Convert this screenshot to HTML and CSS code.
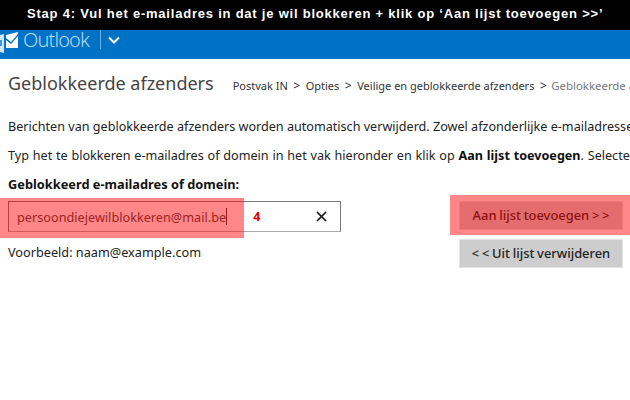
FILE: index.html
```
<!DOCTYPE html>
<html lang="nl">
<head>
<meta charset="utf-8">
<title>Stap 4</title>
<link rel="stylesheet" href="styles.css">
</head>
<body>
<div class="caption">Stap 4: Vul het e-mailadres in dat je wil blokkeren + klik op ‘Aan lijst toevoegen &gt;&gt;’</div>
<header class="topbar">
  <svg class="logo" width="18" height="22" viewBox="0 0 18 22" aria-hidden="true">
    <path d="M0 3 L4 2 L4 21 L0 20 Z" fill="#cfe6f6"/>
    <path d="M0 8 L2 8 L2 14 L0 14 Z" fill="#3f93d3"/>
    <path d="M6 3 L18 0 L18 2 L11 10 L6 6 Z" fill="#fff"/>
    <path d="M6 8 L11 12 L18 4 L18 16 L6 16 Z" fill="#fff"/>
  </svg>
  <span class="brand">Outlook</span>
  <span class="divider"></span>
  <svg class="chevron" width="12" height="8" viewBox="0 0 12 8" aria-hidden="true">
    <path d="M1 1.5 L6 6.5 L11 1.5" fill="none" stroke="#fff" stroke-width="2"/>
  </svg>
</header>
<main class="page">
  <div class="heading">
    <h1 class="title">Geblokkeerde afzenders</h1>
    <nav class="crumbs">
      <span>Postvak IN</span><b class="sep">&gt;</b><span>Opties</span><b class="sep">&gt;</b><span>Veilige en geblokkeerde afzenders</span><b class="sep">&gt;</b><span class="current">Geblokkeerde a</span>
    </nav>
  </div>
  <p class="line">Berichten van geblokkeerde afzenders worden automatisch verwijderd. Zowel afzonderlijke e-mailadresse</p>
  <p class="line line-wide">Typ het te blokkeren e-mailadres of domein in het vak hieronder en klik op <strong>Aan lijst toevoegen</strong>. Selecte</p>
  <div class="label">Geblokkeerd e-mailadres of domein:</div>
  <div class="form">
    <div class="field-col">
      <div class="field">
        <span class="value">persoondiejewilblokkeren@mail.be</span><span class="caret"></span>
        <span class="step">4</span>
        <svg class="clear" width="11" height="11" viewBox="0 0 11 11" aria-hidden="true">
          <path d="M1 1 L10 10 M10 1 L1 10" stroke="#111" stroke-width="1.6" fill="none"/>
        </svg>
      </div>
      <div class="example">Voorbeeld: naam@example.com</div>
    </div>
    <div class="buttons">
      <div class="btn">Aan lijst toevoegen &gt; &gt;</div>
      <div class="btn">&lt; &lt; Uit lijst verwijderen</div>
    </div>
  </div>
</main>
<div class="mark mark-field"></div>
<div class="mark mark-button"></div>
</body>
</html>
```
FILE: styles.css
```
html, body {
  margin: 0;
  padding: 0;
}
body {
  width: 630px;
  height: 400px;
  overflow: hidden;
  position: relative;
  background: #fff;
  color: #222;
  font-family: "Noto Sans", "Open Sans", sans-serif;
  font-size: 13px;
}
.caption {
  height: 30px;
  background: #000;
  color: #fff;
  font-family: "Liberation Sans", Arial, sans-serif;
  font-weight: 700;
  font-size: 13px;
  letter-spacing: 0.78px;
  line-height: 28px;
  padding-left: 27px;
  white-space: nowrap;
}
.topbar {
  height: 29px;
  background: #0072c6;
  display: flex;
  align-items: flex-start;
}
.logo {
  margin-top: 2px;
  flex: none;
}
.brand {
  margin-left: 5px;
  color: #b4d9f2;
  font-size: 20px;
  font-weight: 300;
  letter-spacing: -0.9px;
  line-height: 24px;
  margin-top: -2px;
}
.divider {
  width: 1.5px;
  height: 19px;
  margin-left: 11px;
  background: #6db0e0;
}
.chevron {
  margin: 6px 0 0 7px;
}
.page {
  padding: 0 0 0 8px;
  white-space: nowrap;
  overflow: hidden;
}
.heading {
  display: flex;
  align-items: baseline;
  height: 59px;
  padding-top: 10px;
  box-sizing: border-box;
}
.title {
  margin: 0;
  font-weight: 400;
  font-size: 18px;
  line-height: 28px;
  color: #444;
}
.crumbs {
  margin-left: 19px;
  font-size: 11px;
  color: #333;
  display: flex;
  align-items: baseline;
}
.sep {
  margin: 0 5.5px;
  font-weight: 400;
  color: #223;
  font-size: 12px;
}
.current {
  color: #777;
  margin-left: -1px;
  font-size: 11.4px;
}
.line {
  margin: 0;
  line-height: 18px;
  height: 29px;
  font-size: 12.6px;
  color: #222;
}
.line-wide {
  word-spacing: 0.55px;
}
.line strong {
  font-weight: 700;
  color: #111;
}
.label {
  font-weight: 700;
  font-size: 12.8px;
  line-height: 16px;
  height: 25px;
  color: #111;
}
.form {
  display: flex;
  align-items: flex-start;
}
.field-col {
  width: 333px;
  flex: none;
}
.field {
  box-sizing: border-box;
  height: 31px;
  border: 1px solid #777;
  border-bottom-color: #aaa;
  display: flex;
  align-items: center;
  padding: 0 13px 0 8px;
  font-size: 12.7px;
  color: #444;
}
.caret {
  width: 1px;
  height: 17px;
  background: #333;
}
.step {
  margin-left: 26px;
  color: #e00000;
  font-weight: 700;
  font-size: 12.5px;
}
.clear {
  margin-left: auto;
}
.example {
  margin-top: 11px;
  font-size: 12.7px;
  line-height: 18px;
}
.buttons {
  margin-left: 118px;
  width: 164px;
  flex: none;
  display: flex;
  flex-direction: column;
  gap: 9px;
}
.btn {
  height: 29px;
  background: #cdcdcd;
  border: 1px solid #e2e2e2;
  box-sizing: border-box;
  text-align: center;
  font-size: 12.9px;
  font-weight: 500;
  line-height: 26px;
  color: #222;
  word-spacing: -0.6px;
}
.mark {
  position: absolute;
  background: rgba(255, 0, 0, 0.47);
}
.mark-field {
  left: 0;
  top: 198px;
  width: 244px;
  height: 40px;
}
.mark-button {
  left: 450px;
  top: 195px;
  width: 180px;
  height: 40px;
}
```
